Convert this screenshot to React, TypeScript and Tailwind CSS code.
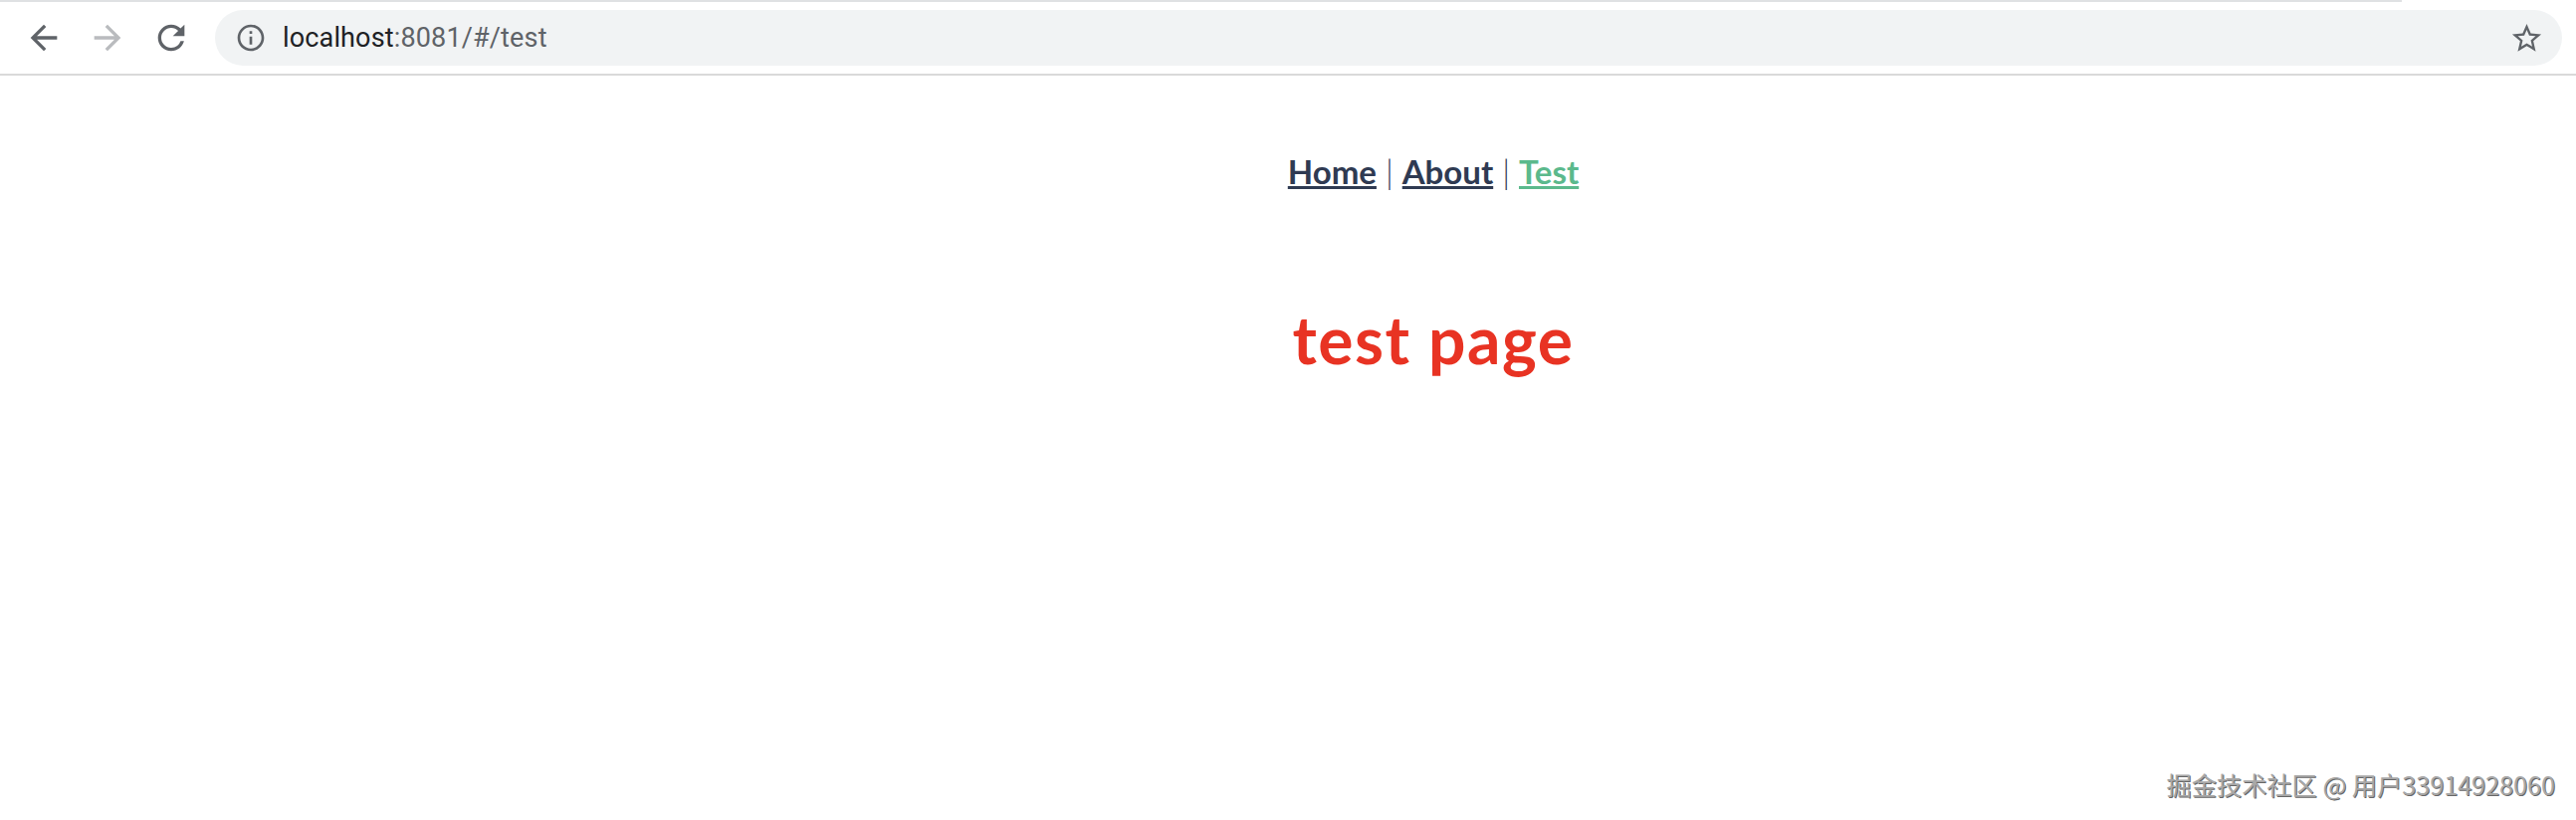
function BackIcon() {
  return (
    <svg viewBox="0 0 24 24" className="h-10 w-10 shrink-0 fill-[#5f6368]">
      <path d="M20 11H7.83l5.59-5.59L12 4l-8 8 8 8 1.41-1.41L7.83 13H20v-2z" />
    </svg>
  )
}

function ForwardIcon() {
  return (
    <svg viewBox="0 0 24 24" className="ml-6 h-10 w-10 shrink-0 fill-[#b9bbbe]">
      <path d="M12 4l-1.41 1.41L16.17 11H4v2h12.17l-5.58 5.59L12 20l8-8z" />
    </svg>
  )
}

function ReloadIcon() {
  return (
    <svg viewBox="0 0 24 24" className="ml-6 h-10 w-10 shrink-0 fill-[#5f6368]">
      <path d="M17.65 6.35A7.958 7.958 0 0 0 12 4c-4.42 0-7.99 3.58-7.99 8s3.57 8 7.99 8c3.73 0 6.84-2.55 7.73-6h-2.08A5.99 5.99 0 0 1 12 18c-3.31 0-6-2.69-6-6s2.69-6 6-6c1.66 0 3.14.69 4.22 1.78L13 11h7V4l-2.35 2.35z" />
    </svg>
  )
}

function InfoIcon() {
  return (
    <svg viewBox="0 0 24 24" className="h-8 w-8 shrink-0 fill-[#5f6368]">
      <path d="M11 7h2v2h-2zm0 4h2v6h-2zm1-9C6.48 2 2 6.48 2 12s4.48 10 10 10 10-4.48 10-10S17.52 2 12 2zm0 18c-4.41 0-8-3.59-8-8s3.59-8 8-8 8 3.59 8 8-3.59 8-8 8z" />
    </svg>
  )
}

function StarIcon() {
  return (
    <svg viewBox="0 0 24 24" className="ml-auto h-[35px] w-[35px] shrink-0 fill-[#5f6368]">
      <path d="M22 9.24l-7.19-.62L12 2 9.19 8.63 2 9.24l5.46 4.73L5.82 21 12 17.27 18.18 21l-1.63-7.03L22 9.24zM12 15.4l-3.76 2.27 1-4.28-3.32-2.88 4.38-.38L12 6.1l1.71 4.04 4.38.38-3.32 2.88 1 4.28L12 15.4z" />
    </svg>
  )
}

export default function App() {
  return (
    <div className="relative h-[824px] w-[2588px] overflow-hidden bg-white font-['Lato',sans-serif]">
      {/* Loading strip */}
      <div className="h-[2px] w-[2413px] bg-[#dfe1e3]" />

      {/* Browser toolbar */}
      <div className="flex h-[74px] items-center border-b-2 border-[#d9d9d9] pl-6 pr-[14px]">
        <BackIcon />
        <ForwardIcon />
        <ReloadIcon />
        <div className="ml-6 flex h-[56px] flex-1 items-center rounded-full bg-[#f1f3f4] pl-5 pr-[18px]">
          <InfoIcon />
          <span className="ml-4 font-['Roboto',sans-serif] text-[27px] tracking-[0.15px] text-[#202124]">
            localhost<span className="text-[#5f6368]">:8081/#/test</span>
          </span>
          <StarIcon />
        </div>
      </div>

      {/* Page content */}
      <main className="w-[2880px] pt-[71px] text-center">
        <nav className="text-[33px] font-light leading-[50px] text-[#2f3a52]">
          <a className="font-bold underline" href="#/">Home</a> | <a className="font-bold underline" href="#/about">About</a> | <a className="font-bold text-[#5bb98c] underline" href="#/test">Test</a>
        </nav>
        <h1 className="mt-[104px] text-[66px] font-bold leading-[80px] tracking-[1.5px] text-[#e83323]">test page</h1>
      </main>

      {/* Watermark */}
      <div className="absolute bottom-[16px] right-[21px] font-['Noto_Sans_CJK_SC',sans-serif] text-[25.2px] leading-[40px] text-[#a8a8a8] [text-shadow:1px_1px_0_#666]">
        掘金技术社区 @ 用户33914928060
      </div>
    </div>
  )
}
